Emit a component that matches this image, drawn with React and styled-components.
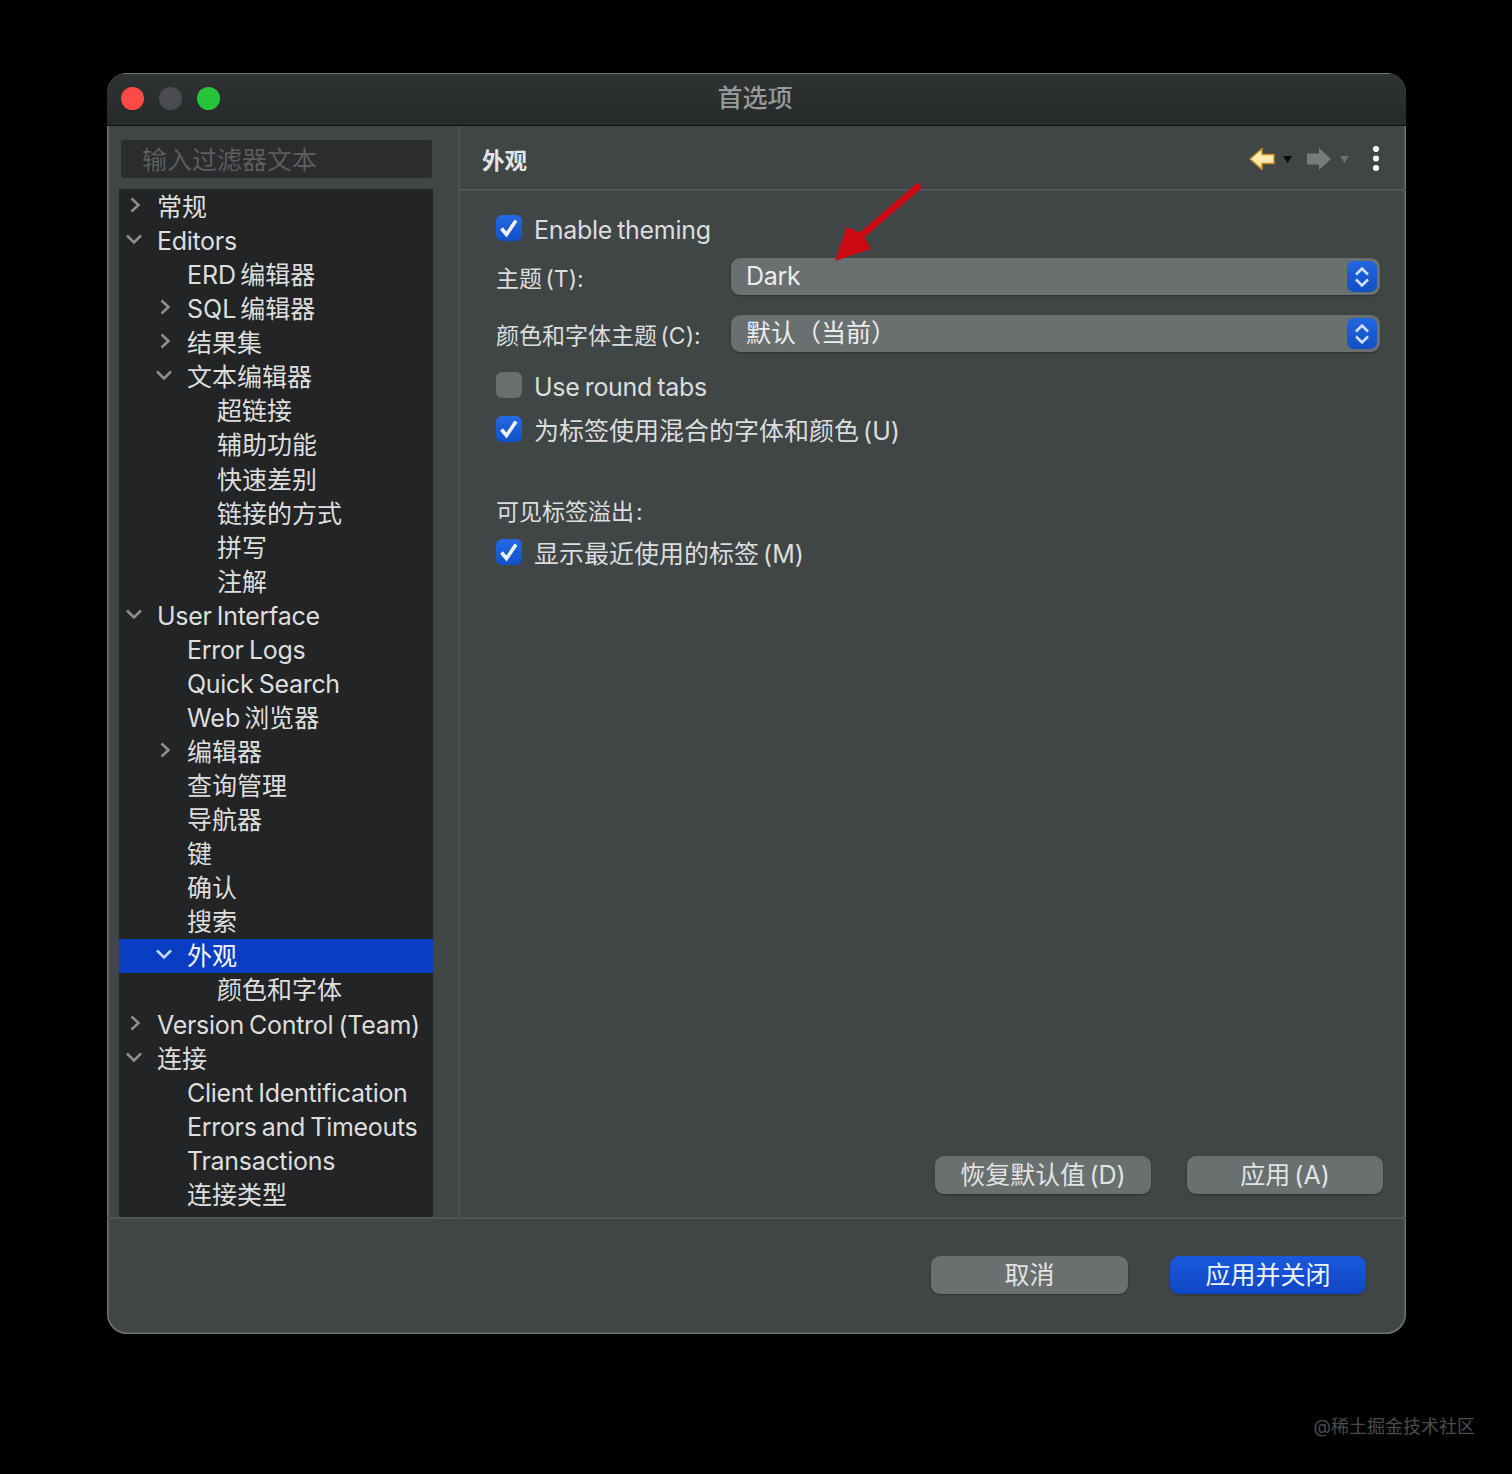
import React from "react";
import styled, { createGlobalStyle, css } from "styled-components";

const GlobalStyle = createGlobalStyle`
  html, body {
    margin: 0;
    padding: 0;
    background: #000;
  }
  body {
    font-family: Inter, "Noto Sans CJK SC", sans-serif;
    line-height: 30px;
    word-spacing: -3px;
  }
`;

// Inter runs a little wider than the original system font
const latinText = css`
  letter-spacing: -0.3px;
  word-spacing: -1.5px;
`;

const Page = styled.div`
  width: 1512px;
  height: 1474px;
  background: #000;
  padding: 73px 106px 0 107px;
  box-sizing: border-box;
  display: flex;
  flex-direction: column;
`;
const Window = styled.div`
  position: relative;
  width: 1299px;
  height: 1261px;
  flex: none;
  display: flex;
  flex-direction: column;
  background: #404546;
  border-radius: 20px;
  box-shadow: inset 0 0 0 1.5px #6f7172;
  overflow: hidden;
`;
const TitleBar = styled.div`
  position: relative;
  height: 53px;
  flex: none;
  display: flex;
  align-items: center;
  justify-content: center;
  background: linear-gradient(#303334, #26292a);
  border-top: 1.5px solid #77797a;
  border-bottom: 1.5px solid #0e0f10;
  box-sizing: border-box;
  padding: 0 17px 0 14px;
`;
const Lights = styled.div`
  position: absolute;
  left: 14px;
  top: 13px;
  display: flex;
  gap: 15px;
`;
const Light = styled.span`
  width: 23px;
  height: 23px;
  border-radius: 50%;
  background: ${(p) => p.$color};
`;
const Title = styled.div`
  font-size: 25px;
  font-weight: 500;
  color: #98999a;
  margin-top: -3px;
`;
const Body = styled.div`
  flex: 1;
  min-height: 0;
  display: flex;
`;
const Sidebar = styled.div`
  width: 353px;
  flex: none;
  padding: 14px 0 0 12px;
  box-sizing: border-box;
  border-right: 2px solid #4c5051;
  display: flex;
  flex-direction: column;
`;
const Filter = styled.div`
  width: 311px;
  height: 38px;
  margin-left: 2px;
  flex: none;
  box-sizing: border-box;
  padding-left: 21px;
  border-radius: 3px;
  background: #2a2c2e;
  color: #5b5d5e;
  font-size: 25px;
  line-height: 40px;
`;
const Tree = styled.div`
  width: 314px;
  flex: 1;
  margin-top: 11px;
  padding-top: 1px;
  background: #222426;
  overflow: hidden;
`;
const Row = styled.div`
  height: 34.07px;
  display: flex;
  align-items: center;
  padding-left: ${(p) => p.$level * 30}px;
  background: ${(p) => (p.$selected ? "#0a3ec2" : "transparent")};
  color: ${(p) => (p.$selected ? "#f4f6fb" : "#dededd")};
  font-size: 25px;
  line-height: 34px;
  white-space: nowrap;
  ${(p) => p.$latin && latinText}
`;
const Twist = styled.span`
  width: 30px;
  margin-right: 8px;
  flex: none;
  display: flex;
  justify-content: center;
  margin-top: -4px;
`;
const Pane = styled.div`
  flex: 1;
  min-width: 0;
  display: flex;
  flex-direction: column;
`;
const PaneHeader = styled.div`
  height: 65px;
  flex: none;
  box-sizing: border-box;
  display: flex;
  align-items: center;
  padding: 0 26px 0 22px;
  border-bottom: 2px solid #515556;
`;
const PaneTitle = styled.div`
  flex: 1;
  font-size: 22.5px;
  font-weight: 700;
  color: #e4e5e5;
  margin-top: 6px;
`;
const Tools = styled.div`
  display: flex;
  align-items: center;
  margin-top: 3px;
`;
const Form = styled.div`
  flex: 1;
  padding: 24px 26px 0 36px;
  display: flex;
  flex-direction: column;
`;
const CheckRow = styled.div`
  display: flex;
  align-items: center;
  gap: 12px;
  height: 30px;
  margin-top: ${(p) => p.$top || 0}px;
  font-size: 25px;
  color: #dcdddd;
  ${(p) => p.$latin && latinText}
`;
const Box = styled.span`
  width: 26px;
  height: 26px;
  flex: none;
  margin-top: -4px;
  box-sizing: border-box;
  border-radius: 6px;
  background: ${(p) => (p.$checked ? "linear-gradient(#2469e6, #1150c8)" : "#6a6e6f")};
  display: flex;
  align-items: center;
  justify-content: center;
`;
const SelectRow = styled.div`
  display: flex;
  align-items: center;
  height: 37px;
  margin-top: ${(p) => p.$top}px;
`;
const FieldLabel = styled.div`
  width: 235px;
  flex: none;
  font-size: 23px;
  color: #dcdddd;
  margin-top: 4px;
`;
const Select = styled.div`
  flex: 1;
  height: 37px;
  box-sizing: border-box;
  display: flex;
  align-items: center;
  justify-content: space-between;
  padding: 0 3px 0 15px;
  border-radius: 9px;
  background: #6a6f70;
  color: #eceded;
  font-size: 25px;
  box-shadow: 0 1px 2px rgba(0, 0, 0, 0.3);
`;
const SelectText = styled.span`
  margin-top: -2px;
  ${(p) => p.$latin && latinText}
`;
const Stepper = styled.span`
  width: 30px;
  height: 31px;
  border-radius: 7px;
  background: linear-gradient(#2166e2, #1250c4);
  display: flex;
  align-items: center;
  justify-content: center;
`;
const Heading = styled.div`
  font-size: 23px;
  color: #dcdddd;
  height: 30px;
  margin-top: ${(p) => p.$top}px;
`;
const ActionRow = styled.div`
  display: flex;
  justify-content: flex-end;
  gap: 36px;
  padding: 0 23px 23px 0;
`;
const Button = styled.div`
  width: ${(p) => p.$width}px;
  height: 38px;
  border-radius: 9px;
  display: flex;
  align-items: center;
  justify-content: center;
  font-size: 25px;
  color: ${(p) => (p.$primary ? "#f2f5fc" : "#e2e3e3")};
  background: ${(p) =>
    p.$primary ? "linear-gradient(#1a58dc, #0d47c4)" : "#6a6f70"};
  box-shadow: 0 1px 2px rgba(0, 0, 0, 0.3);
`;
const Footer = styled.div`
  height: 117px;
  flex: none;
  box-sizing: border-box;
  border-top: 2px solid #515556;
  display: flex;
  justify-content: flex-end;
  gap: 42px;
  padding: 37px 40px 0 0;
`;
const ArrowMark = styled.svg`
  position: absolute;
  left: 725px;
  top: 108px;
`;
const Watermark = styled.div`
  margin-top: 82px;
  align-self: flex-end;
  margin-right: -69px;
  font-size: 18px;
  line-height: 22px;
  color: #4c4c4c;
`;

const treeRows = [
  { label: "常规", level: 0, twist: "right" },
  { label: "Editors", level: 0, twist: "down", latin: true },
  { label: "ERD 编辑器", level: 1 },
  { label: "SQL 编辑器", level: 1, twist: "right" },
  { label: "结果集", level: 1, twist: "right" },
  { label: "文本编辑器", level: 1, twist: "down" },
  { label: "超链接", level: 2 },
  { label: "辅助功能", level: 2 },
  { label: "快速差别", level: 2 },
  { label: "链接的方式", level: 2 },
  { label: "拼写", level: 2 },
  { label: "注解", level: 2 },
  { label: "User Interface", level: 0, twist: "down", latin: true },
  { label: "Error Logs", level: 1, latin: true },
  { label: "Quick Search", level: 1, latin: true },
  { label: "Web 浏览器", level: 1 },
  { label: "编辑器", level: 1, twist: "right" },
  { label: "查询管理", level: 1 },
  { label: "导航器", level: 1 },
  { label: "键", level: 1 },
  { label: "确认", level: 1 },
  { label: "搜索", level: 1 },
  { label: "外观", level: 1, twist: "down", selected: true },
  { label: "颜色和字体", level: 2 },
  { label: "Version Control (Team)", level: 0, twist: "right", latin: true },
  { label: "连接", level: 0, twist: "down" },
  { label: "Client Identification", level: 1, latin: true },
  { label: "Errors and Timeouts", level: 1, latin: true },
  { label: "Transactions", level: 1, latin: true },
  { label: "连接类型", level: 1 },
];

const Chevron = ({ dir, color }) => (
  <svg width="18" height="18" viewBox="0 0 18 18" fill="none" stroke={color} strokeWidth="2.5">
    {dir === "right" ? <path d="M6.5 2.5L13.5 9l-7 6.5" /> : <path d="M2 5.5L9 12.5l7-7" />}
  </svg>
);

const Check = () => (
  <svg width="22" height="22" viewBox="0 0 22 22" fill="none" stroke="#eef3fd" strokeWidth="3.6">
    <path d="M3.5 11.5l5 6L18 3.5" />
  </svg>
);

const UpDown = () => (
  <svg width="18" height="24" viewBox="0 0 18 24" fill="none" stroke="#cfe0fb" strokeWidth="2.6">
    <path d="M3 9.5L9 3.5l6 6M3 14.5l6 6 6-6" />
  </svg>
);

const NavArrows = () => (
  <Tools>
    <svg width="26" height="24" viewBox="0 0 26 24">
      <defs>
        <linearGradient id="backFill" x1="0" y1="0" x2="0" y2="1">
          <stop offset="0" stopColor="#fff6d2" />
          <stop offset="1" stopColor="#ffe48a" />
        </linearGradient>
      </defs>
      <path d="M1 12L13 1.5V7.5H25V16.5H13V22.5Z" fill="url(#backFill)" stroke="#c98a22" strokeWidth="1.6" strokeLinejoin="round" />
    </svg>
    <svg width="9" height="7" viewBox="0 0 9 7" style={{ marginLeft: 8 }}>
      <path d="M0 0H9L4.5 7Z" fill="#0c0c0c" />
    </svg>
    <svg width="26" height="24" viewBox="0 0 26 24" style={{ marginLeft: 14 }}>
      <path d="M25 12L13 1V6.5H1V17.5H13V23Z" fill="#777b7c" />
    </svg>
    <svg width="9" height="7" viewBox="0 0 9 7" style={{ marginLeft: 8 }}>
      <path d="M0 0H9L4.5 7Z" fill="#6c7071" />
    </svg>
    <svg width="8" height="28" viewBox="0 0 8 28" style={{ marginLeft: 23 }}>
      <circle cx="4" cy="4" r="3" fill="#fff" />
      <circle cx="4" cy="13.5" r="3" fill="#fff" />
      <circle cx="4" cy="23" r="3" fill="#fff" />
    </svg>
  </Tools>
);

const App = () => {
  return (
    <Page>
      <GlobalStyle />
      <Window>
        <TitleBar>
          <Lights>
            <Light $color="#fc4a47" />
            <Light $color="#4a4c4f" />
            <Light $color="#27c43a" />
          </Lights>
          <Title>首选项</Title>
        </TitleBar>
        <Body>
          <Sidebar>
            <Filter>输入过滤器文本</Filter>
            <Tree>
              {treeRows.map((row) => (
                <Row key={row.label} $level={row.level} $selected={row.selected} $latin={row.latin}>
                  <Twist>
                    {row.twist && (
                      <Chevron dir={row.twist} color={row.selected ? "#c9d6f5" : "#8d8f90"} />
                    )}
                  </Twist>
                  {row.label}
                </Row>
              ))}
            </Tree>
          </Sidebar>
          <Pane>
            <PaneHeader>
              <PaneTitle>外观</PaneTitle>
              <NavArrows />
            </PaneHeader>
            <Form>
              <CheckRow $latin>
                <Box $checked><Check /></Box>
                Enable theming
              </CheckRow>
              <SelectRow $top={13}>
                <FieldLabel>主题 (T):</FieldLabel>
                <Select>
                  <SelectText $latin>Dark</SelectText>
                  <Stepper><UpDown /></Stepper>
                </Select>
              </SelectRow>
              <SelectRow $top={20}>
                <FieldLabel>颜色和字体主题 (C):</FieldLabel>
                <Select>
                  <SelectText>默认（当前）</SelectText>
                  <Stepper><UpDown /></Stepper>
                </Select>
              </SelectRow>
              <CheckRow $top={20} $latin>
                <Box />
                Use round tabs
              </CheckRow>
              <CheckRow $top={14}>
                <Box $checked><Check /></Box>
                为标签使用混合的字体和颜色 (U)
              </CheckRow>
              <Heading $top={51}>可见标签溢出{"\u200a"}:</Heading>
              <CheckRow $top={12}>
                <Box $checked><Check /></Box>
                显示最近使用的标签 (M)
              </CheckRow>
            </Form>
            <ActionRow>
              <Button $width={216}>恢复默认值 (D)</Button>
              <Button $width={196}>应用 (A)</Button>
            </ActionRow>
          </Pane>
        </Body>
        <Footer>
          <Button $width={197}>取消</Button>
          <Button $width={196} $primary>应用并关闭</Button>
        </Footer>
        <ArrowMark width="92" height="84" viewBox="0 0 92 84">
          <path
            d="M85.7 1.4L90.3 6.6L32.3 56.6L38.7 68L3 80L14.7 45.7L27.7 51.4Z"
            fill="#cd0a14"
          />
        </ArrowMark>
      </Window>
      <Watermark>@稀土掘金技术社区</Watermark>
    </Page>
  );
};

export default App;
